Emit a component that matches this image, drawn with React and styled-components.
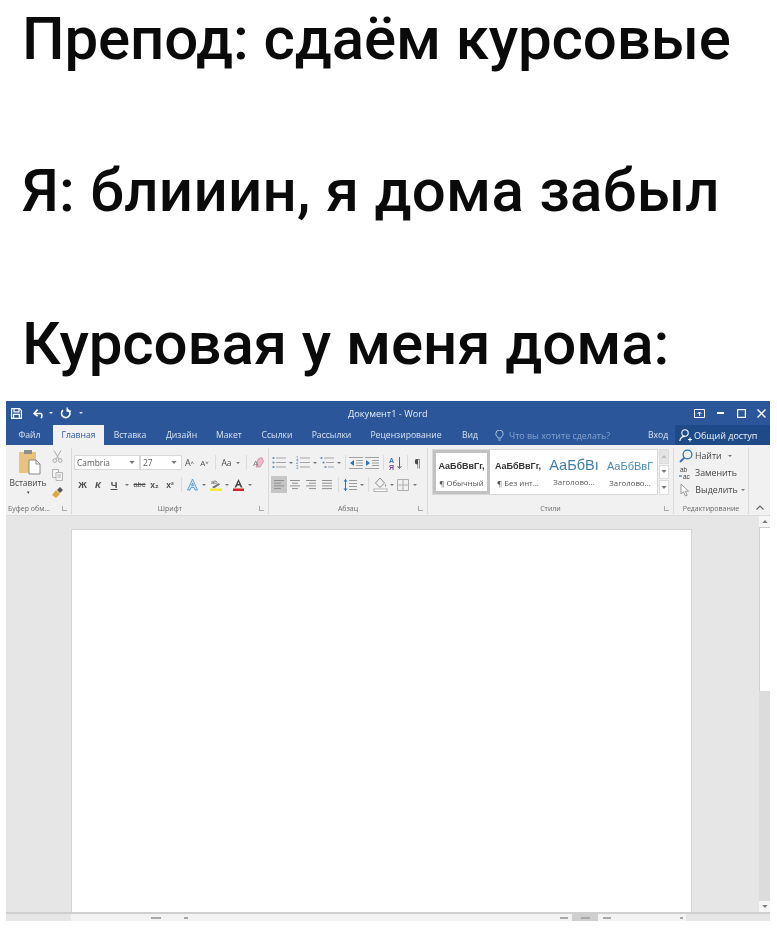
import React from "react";
import styled, { createGlobalStyle } from "styled-components";

const Global = createGlobalStyle`
  html, body { margin: 0; padding: 0; background: #fff; }
  body { width: 777px; height: 930px; overflow: hidden; font-family: "Open Sans", "Liberation Sans", sans-serif; }
`;
const Headings = styled.div`
  padding: 0 0 0 22px;
  height: 401px;
  overflow: hidden;
`;
const Line = styled.div`
  font-family: Roboto, "Liberation Sans", sans-serif;
  font-weight: 500;
  font-size: 60px;
  letter-spacing: ${p => p.$ls}px;
  line-height: 66px;
  margin-top: ${p => p.$top}px;
  color: #0a0a0a;
  white-space: nowrap;
`;
const Win = styled.div`
  margin: 0 7px 0 6px;
  filter: blur(0.5px);
  color: #444;
`;
const TitleBar = styled.div`
  height: 24px;
  background: #2b579a;
  display: flex;
  align-items: center;
  color: #fff;
  position: relative;
`;
const Qat = styled.div`
  display: flex;
  align-items: center;
  padding-left: 5px;
  width: 329px;
  box-sizing: border-box;
`;
const QatItem = styled.span`
  display: flex;
  margin-left: ${p => p.$ml || 0}px;
`;
const DocTitle = styled.div`
  flex: 1;
  font-size: 9.2px;
  color: #e4ebf5;
  padding-left: 13px;
`;
const Controls = styled.div`
  display: flex;
  align-items: center;
`;
const Ctl = styled.span`
  width: ${p => p.$w}px;
  display: flex;
  justify-content: center;
`;
const Tabs = styled.div`
  height: 20px;
  background: #2b579a;
  display: flex;
  align-items: stretch;
  font-size: 8.6px;
  color: #d9e3f1;
`;
const Tab = styled.div`
  width: ${p => p.$w}px;
  display: flex;
  align-items: center;
  justify-content: center;
  white-space: nowrap;
  background: ${p => (p.$on ? "#f1f1f1" : "transparent")};
  color: ${p => (p.$on ? "#2b579a" : "inherit")};
`;
const TellMe = styled.div`
  width: 160px;
  display: flex;
  align-items: center;
  gap: 5px;
  padding-left: 7px;
  color: #87a3cc;
  font-size: 8.9px;
  white-space: nowrap;
  box-sizing: border-box;
`;
const Enter = styled.div`
  width: 27px;
  display: flex;
  align-items: center;
  justify-content: flex-start;
`;
const Share = styled.div`
  flex: 1;
  background: #1f4a88;
  color: #eef3fa;
  display: flex;
  align-items: center;
  gap: 2px;
  padding-left: 4px;
  font-size: 9px;
  white-space: nowrap;
`;
const Ribbon = styled.div`
  height: 71px;
  background: #f1f1f1;
  display: grid;
  grid-template-columns: 66px 197px 159px 246px 75px 21px;
  border-bottom: 1px solid #dcdcdc;
  box-sizing: border-box;
`;
const Group = styled.div`
  display: flex;
  flex-direction: column;
  position: relative;
  border-right: ${p => (p.$plain ? "none" : "1px solid #dadada")};
  margin: 3px 0 1px;
  min-width: 0;
`;
const GroupBody = styled.div`
  flex: 1;
  min-height: 0;
`;
const GroupLabel = styled.div`
  height: 12px;
  font-size: 7px;
  color: #6a6a6a;
  display: flex;
  align-items: center;
  justify-content: ${p => (p.$left ? "flex-start" : "center")};
  white-space: nowrap;
  padding-left: ${p => (p.$left ? 2 : 0)}px;
`;
const Launcher = styled.span`
  position: absolute;
  right: 4px;
  bottom: 3px;
  width: 4px;
  height: 4px;
  border-left: 1px solid #a8a8a8;
  border-bottom: 1px solid #a8a8a8;
`;
const Clip = styled.div`
  display: grid;
  grid-template-columns: 44px 15px;
  height: 100%;
`;
const Paste = styled.div`
  display: flex;
  flex-direction: column;
  align-items: center;
  font-size: 8.4px;
  color: #444;
  padding-top: 1px;
  gap: 2px;
`;
const PasteFrame = styled.span`
  display: flex;
  margin-left: 6px;
`;
const PasteArrow = styled.span`
  font-size: 5px;
  line-height: 6px;
  margin-top: -1px;
`;
const ClipSide = styled.div`
  display: flex;
  flex-direction: column;
  align-items: center;
  gap: 6px;
  padding-top: 2px;
`;
const Rows = styled.div`
  display: flex;
  flex-direction: column;
  gap: 5px;
  padding-top: 6px;
`;
const Row = styled.div`
  display: flex;
  align-items: center;
  height: ${p => p.$h || 17}px;
  padding-left: ${p => p.$pad || 0}px;
`;
const Combo = styled.div`
  width: ${p => p.$w}px;
  height: 15px;
  box-sizing: border-box;
  background: #fff;
  border: 1px solid #d8d8d8;
  margin-right: ${p => p.$gap || 0}px;
  display: flex;
  align-items: center;
  justify-content: space-between;
  padding: 0 4px 0 2px;
  font-size: 8.4px;
  color: #5a5a5a;
`;
const Tool = styled.div`
  width: ${p => p.$w || 16}px;
  height: ${p => p.$h || 17}px;
  flex: none;
  display: flex;
  align-items: center;
  justify-content: center;
  font-size: ${p => p.$fs || 9}px;
  font-weight: ${p => p.$fw || 400};
  font-style: ${p => (p.$it ? "italic" : "normal")};
  color: ${p => p.$c || "#4d4d4d"};
  background: ${p => (p.$on ? "#c6c6c6" : "transparent")};
  font-family: ${p => (p.$sans ? '"Liberation Sans", sans-serif' : "inherit")};
`;
const Caret = styled.sup`
  font-size: 6px;
  line-height: 0;
  vertical-align: 3px;
`;
const Drop = styled.span`
  flex: none;
  width: 0;
  height: 0;
  border-left: 2px solid transparent;
  border-right: 2px solid transparent;
  border-top: 2px solid ${p => p.$c || "#777"};
  margin: 0 ${p => p.$m ?? 4}px;
`;
const Sep = styled.span`
  flex: none;
  width: 1px;
  height: 15px;
  background: #dcdcdc;
  margin: 0 ${p => p.$m ?? 3}px;
`;
const StylesWrap = styled.div`
  display: flex;
  padding: 1px 0 0 4px;
`;
const Gallery = styled.div`
  width: 226px;
  height: 46px;
  background: #fff;
  border: 1px solid #d8d8d8;
  display: grid;
  grid-template-columns: 57px 56px 56px 56px;
  box-sizing: border-box;
`;
const StyleCell = styled.div`
  display: flex;
  flex-direction: column;
  align-items: center;
  justify-content: flex-start;
  box-sizing: border-box;
  border: ${p => (p.$on ? "3px solid #c2c2c2" : "none")};
  padding-top: ${p => (p.$on ? 6 : 9)}px;
  overflow: hidden;
  white-space: nowrap;
`;
const StyleSample = styled.div`
  font-size: ${p => p.$fs || 8}px;
  font-weight: ${p => p.$fw || 400};
  color: ${p => p.$c || "#333"};
  height: 14px;
  line-height: 14px;
  font-family: "Liberation Sans", sans-serif;
  width: 100%;
  text-align: center;
  overflow: hidden;
  margin-top: ${p => p.$mt || 0}px;
`;
const StyleName = styled.div`
  font-size: 7.8px;
  color: #555;
  margin-top: 5px;
`;
const GalleryScroll = styled.div`
  width: 10px;
  height: 46px;
  margin-left: 1px;
  display: grid;
  grid-template-rows: 1fr 1fr 1fr;
  gap: 1px;
`;
const GalleryBtn = styled.div`
  background: ${p => (p.$off ? "#e4e4e4" : "#fff")};
  border: 1px solid #dcdcdc;
  display: flex;
  align-items: center;
  justify-content: center;
`;
const Edit = styled.div`
  display: flex;
  flex-direction: column;
  margin-top: -1px;
  padding: 0 0 0 5px;
`;
const EditRow = styled.div`
  height: 17px;
  display: flex;
  align-items: center;
  gap: 2px;
  font-size: 8.8px;
  color: #444;
  white-space: nowrap;
`;
const Collapse = styled.div`
  display: flex;
  align-items: flex-end;
  justify-content: center;
  padding-bottom: 5px;
`;
const Workspace = styled.div`
  height: 398px;
  background: #e6e6e6;
  display: grid;
  grid-template-columns: 65px 621px 67px 11px;
  box-sizing: border-box;
  border-bottom: 2px solid #cfcfcf;
`;
const Page = styled.div`
  margin-top: 13px;
  background: #fff;
  border: 1px solid #d4d4d4;
  border-bottom: none;
  box-sizing: border-box;
`;
const Scroll = styled.div`
  display: flex;
  flex-direction: column;
  background: #dcdcdc;
  grid-column: 4;
`;
const ScrollBtn = styled.div`
  height: 11px;
  background: #f6f6f6;
  display: flex;
  align-items: center;
  justify-content: center;
`;
const Thumb = styled.div`
  height: 164px;
  background: #fff;
  border-left: 1px solid #cfcfcf;
  border-top: 1px solid #cfcfcf;
  box-sizing: border-box;
`;
const Track = styled.div`
  flex: 1;
`;
const Status = styled.div`
  height: 7px;
  background: #f3f3f3;
  display: flex;
  align-items: center;
  overflow: hidden;
`;
const StatusCell = styled.div`
  width: ${p => p.$w}px;
  height: 100%;
  flex: none;
  background: ${p => p.$bg || "transparent"};
  display: flex;
  align-items: center;
  justify-content: center;
`;
const Speck = styled.span`
  display: block;
  width: ${p => p.$w || 4}px;
  height: 2px;
  background: ${p => p.$c || "#a8a8a8"};
`;

const Tri = ({ up, c = "#777" }) => (
  <svg width="6" height="3" viewBox="0 0 7 4"><path d={up ? "M0 4 3.500 0 7 4z" : "M0 0h7L3.500 4z"} fill={c} /></svg>
);
const SaveIco = () => (
  <svg width="11" height="11" viewBox="0 0 11 11" fill="none" stroke="#fff" strokeWidth="1.200">
    <path d="M.6.6h8l1.800 1.800v8H.6z" /><path d="M3 .8v3h5v-3M2.600 10.200V6.400h5.800v3.800" />
  </svg>
);
const UndoIco = () => (
  <svg width="14" height="11" viewBox="0 0 14 11" fill="none" stroke="#fff" strokeWidth="1.600">
    <path d="M1 5.500h7a3.200 3.200 0 0 1 0 4.600" /><path d="M4.600 1.600 1 5.500l3.600 2.600" />
  </svg>
);
const RedoIco = () => (
  <svg width="12" height="12" viewBox="0 0 12 12" fill="none" stroke="#fff" strokeWidth="1.600">
    <path d="M7 2.400A4.200 4.200 0 1 1 3 3.200" /><path d="M7.200 .6v3.600H11" strokeWidth="1.300" />
  </svg>
);
const DisplayIco = () => (
  <svg width="11" height="9" viewBox="0 0 11 9" fill="none" stroke="#fff"><path d="M.5.500h10v8H.5z" /><path d="M5.500 7V3M3.500 5l2-2 2 2" /></svg>
);
const Bulb = () => (
  <svg width="9" height="11" viewBox="0 0 9 11" fill="none" stroke="#a8c0e0"><path d="M3 8C2.600 6.400.8 5.800.8 3.800a3.700 3.700 0 0 1 7.400 0C8.200 5.800 6.400 6.400 6 8zM3.200 10h2.600" /></svg>
);
const PersonIco = () => (
  <svg width="13" height="13" viewBox="0 0 13 13" fill="none" stroke="#fff" strokeWidth="1.100">
    <circle cx="6" cy="4" r="3.200" /><path d="M.8 12c.5-3 2.300-4.600 5.200-4.600M9 10.500h4M11 8.500v4" />
  </svg>
);
const PasteIco = () => (
  <svg width="24" height="26" viewBox="0 0 24 26">
    <rect x="0" y="3" width="17" height="21" rx="1" fill="#e7c37d" />
    <rect x="5" y="1" width="8" height="4" fill="#8d8d8d" />
    <path d="M10 11h7l4 4v10H10z" fill="#fff" stroke="#888" />
    <path d="M17 11v4h4" fill="none" stroke="#888" />
  </svg>
);
const Scissors = () => (
  <svg width="11" height="13" viewBox="0 0 11 13" fill="none" stroke="#aaa"><path d="M2 .5 7 9M9 .5 4 9" /><circle cx="2.800" cy="10.500" r="1.800" /><circle cx="8.200" cy="10.500" r="1.800" /></svg>
);
const CopyIco = () => (
  <svg width="11" height="12" viewBox="0 0 11 12" fill="#f4f4f4" stroke="#b4b4b4"><path d="M.5.5h6v8h-6z" /><path d="M4 3.500h6.500v8H4z" /><path d="M5.500 6h3.500M5.500 8h3.500" /></svg>
);
const Brush = () => (
  <svg width="11" height="11" viewBox="0 0 11 11"><path d="M0 8 4 3l4 4-4 4z" fill="#e0a93d" /><path d="M5 3l3-3 3 3-3 3z" fill="#555" /></svg>
);
const Eraser = () => (
  <svg width="11" height="12" viewBox="0 0 11 12"><path d="M5 2 9 .5l1.500 4L7 10H3z" fill="#eeb9c9" stroke="#c4718f" strokeWidth=".6" /><text x="0" y="9" fontSize="8" fill="#7a7a7a" fontFamily="Liberation Sans">A</text></svg>
);
const ColorA = ({ bar, fill = "#444" }) => (
  <svg width="13" height="13" viewBox="0 0 13 13">
    <path d="M6.500 1 2.500 9.500h1.800l.8-2h2.800l.8 2h1.800zM5.700 6 6.500 3.800 7.300 6z" fill={fill} />
    <rect x="1" y="10.500" width="11" height="2.500" fill={bar} />
  </svg>
);
const OutlineA = () => (
  <svg width="13" height="13" viewBox="0 0 13 13"><path d="M6.500 1 1.500 12h2.500l1-2.500h3l1 2.500h2.500zM5.600 7.500 6.500 5l.9 2.500z" fill="#d3e3f3" stroke="#4a90c8" strokeWidth=".8" /></svg>
);
const Highlight = () => (
  <svg width="14" height="13" viewBox="0 0 14 13">
    <text x="2" y="6" fontSize="6" fill="#555" fontFamily="Liberation Sans">ab</text>
    <path d="M3 9 10 5l1 1.500-6 4z" fill="#777" />
    <rect x="1" y="10.500" width="12" height="2.500" fill="#f4e735" />
  </svg>
);
const Lines = ({ kind }) => {
  const rows = {
    left: [[2, 12], [2, 9], [2, 12], [2, 9]],
    center: [[2, 12], [4, 10], [2, 12], [4, 10]],
    right: [[2, 12], [5, 12], [2, 12], [5, 12]],
    just: [[2, 12], [2, 12], [2, 12], [2, 12]],
  }[kind];
  return (
    <svg width="14" height="11" viewBox="0 0 14 11" stroke="#909090">
      {rows.map(([a, b], i) => <path key={i} d={`M${a} ${1.500 + i * 2.700}H${b}`} />)}
    </svg>
  );
};
const ListIco = ({ kind }) => (
  <svg width="14" height="13" viewBox="0 0 14 13">
    {[2, 6.500, 11].map((y, i) => (
      <g key={i}>
        {kind === "num"
          ? <text x="0" y={y + 1.500} fontSize="4.500" fill="#5a8fc4" fontFamily="Liberation Sans">{i + 1}</text>
          : <circle cx={kind === "multi" ? 1.500 + i * 2 : 1.500} cy={y} r="1.100" fill="#5a8fc4" />}
        <path d={`M${kind === "multi" ? 4 + i * 2 : 4} ${y}H14`} stroke="#a4a4a4" />
      </g>
    ))}
  </svg>
);
const Indent = ({ out }) => (
  <svg width="14" height="12" viewBox="0 0 14 12" stroke="#a0a0a0">
    <path d="M0 .5h14M7 3.500h7M7 6h7M7 8.500h7M0 11.500h14" />
    <path d={out ? "M5 3 1 6l4 3z" : "M1 3l4 3-4 3z"} fill="#2e75b6" stroke="none" />
  </svg>
);
const SortIco = () => (
  <svg width="14" height="14" viewBox="0 0 14 14">
    <text x="0" y="6.500" fontSize="7" fontWeight="700" fill="#3a78b8" fontFamily="Liberation Sans">А</text>
    <text x="0" y="13.500" fontSize="7" fontWeight="700" fill="#7a4a96" fontFamily="Liberation Sans">Я</text>
    <path d="M10.500 1v11M8.500 10l2 2.500 2-2.500" fill="none" stroke="#666" />
  </svg>
);
const Spacing = () => (
  <svg width="14" height="14" viewBox="0 0 14 14"><path d="M2.500 1v12" stroke="#2e75b6" /><path d="M.5 3.500l2-2.500 2 2.500zM.5 10.500l2 2.500 2-2.500z" fill="#2e75b6" /><path d="M6 2.500h8M6 5.500h8M6 8.500h8M6 11.500h8" stroke="#999" /></svg>
);
const Bucket = () => (
  <svg width="15" height="15" viewBox="0 0 15 15" fill="none"><path d="M7 1 2.500 6 7 10.500 11.500 6z" stroke="#888" /><path d="M12.500 7c.8 1.200 1 2 .3 2.500-.7.300-1.300-.6-.3-2.500z" fill="#888" /><rect x="1" y="12" width="13" height="2.500" stroke="#b4b4b4" fill="#fff" /></svg>
);
const Borders = () => (
  <svg width="12" height="12" viewBox="0 0 12 12" fill="none" stroke="#aeaeae"><path d="M.5.5h11v11H.5zM6 .5v11M.5 6h11" /></svg>
);
const Search = () => (
  <svg width="14" height="14" viewBox="0 0 14 14" fill="none" stroke="#2f6cb3" strokeWidth="1.300"><circle cx="8.500" cy="5.500" r="4.400" /><path d="M5.300 8.700 1 13" strokeWidth="1.800" /></svg>
);
const Replace = () => (
  <svg width="14" height="14" viewBox="0 0 14 14">
    <text x="1" y="6" fontSize="6.500" fill="#444" fontFamily="Liberation Sans">ab</text>
    <text x="4" y="13" fontSize="6.500" fill="#444" fontFamily="Liberation Sans">ac</text>
    <path d="M0 10h3" stroke="#2e75b6" strokeWidth="1.200" />
  </svg>
);
const Cursor = () => (
  <svg width="12" height="14" viewBox="0 0 12 14"><path d="M2 1v10l2.500-2.200L6.500 13l1.700-.8-2-4h3.300z" fill="#fff" stroke="#9a9a9a" /></svg>
);

const TAB_DATA = [
  ["Файл", 47], ["Главная", 51, true], ["Вставка", 52], ["Дизайн", 51], ["Макет", 44],
  ["Ссылки", 52], ["Рассылки", 57], ["Рецензирование", 92], ["Вид", 36],
];
const STYLE_DATA = [
  ["АаБбВвГг,", "¶ Обычный", { $fw: 700, $fs: 9 }, true],
  ["АаБбВвГг,", "¶ Без инт...", { $fw: 700, $fs: 9 }],
  ["АаБбВı", "Заголово...", { $fs: 14.500, $c: "#3f7ea8", $mt: -1 }],
  ["АаБбВвГ", "Заголово...", { $fs: 11, $c: "#4a8ab5" }],
];

export default function App() {
  return (
    <>
      <Global />
      <Headings>
        <Line $top={6} $ls={-0.12}>Препод: сдаём курсовые</Line>
        <Line $top={86} $ls={0.25}>Я: блииин, я дома забыл</Line>
        <Line $top={87} $ls={-0.08}>Курсовая у меня дома:</Line>
      </Headings>
      <Win>
        <TitleBar>
          <Qat>
            <SaveIco />
            <QatItem $ml={11}><UndoIco /></QatItem>
            <Drop $m={2} $c="#fff" />
            <QatItem $ml={5}><RedoIco /></QatItem>
            <QatItem $ml={7}><Drop $m={0} $c="#dfe7f3" /></QatItem>
          </Qat>
          <DocTitle>Документ1 - Word</DocTitle>
          <Controls>
            <Ctl $w={21}><DisplayIco /></Ctl>
            <Ctl $w={21}><Speck $w={7} $c="#fff" /></Ctl>
            <Ctl $w={21}><svg width="9" height="9" viewBox="0 0 9 9" fill="none" stroke="#fff" strokeWidth="1.200"><path d="M.6.6h7.800v7.800H.6z" /></svg></Ctl>
            <Ctl $w={18}><svg width="9" height="9" viewBox="0 0 9 9" stroke="#fff" strokeWidth="1.400"><path d="m.5.500 8 8M8.500.5l-8 8" /></svg></Ctl>
          </Controls>
        </TitleBar>
        <Tabs>
          {TAB_DATA.map(([t, w, on]) => <Tab key={t} $w={w} $on={on}>{t}</Tab>)}
          <TellMe><Bulb />Что вы хотите сделать?</TellMe>
          <Enter>Вход</Enter>
          <Share><PersonIco />Общий доступ</Share>
        </Tabs>
        <Ribbon>
          <Group>
            <GroupBody>
              <Clip>
                <Paste>
                  <PasteFrame><PasteIco /></PasteFrame>
                  Вставить
                  <PasteArrow>▾</PasteArrow>
                </Paste>
                <ClipSide><Scissors /><CopyIco /><Brush /></ClipSide>
              </Clip>
            </GroupBody>
            <GroupLabel $left>Буфер обм...</GroupLabel>
            <Launcher />
          </Group>
          <Group>
            <GroupBody>
              <Rows>
                <Row $pad={2}>
                  <Combo $w={66}>Cambria<Tri /></Combo>
                  <Combo $w={42}>27<Tri /></Combo>
                  <Tool $w={15} $fs={9}>A<Caret>˄</Caret></Tool>
                  <Tool $w={15} $fs={8}>A<Caret>˅</Caret></Tool>
                  <Sep $m={3} />
                  <Tool $w={15} $fs={8.500}>Aa</Tool>
                  <Drop $m={2} />
                  <Sep $m={4} />
                  <Tool $w={14}><Eraser /></Tool>
                </Row>
                <Row $pad={3}>
                  <Tool $w={15} $fw={700} $fs={9.500} $sans>Ж</Tool>
                  <Tool $w={16} $fw={700} $it $fs={9.500} $sans>К</Tool>
                  <Tool $w={16} $fw={700} $fs={9.500} $sans style={{ textDecoration: "underline" }}>Ч</Tool>
                  <Drop $m={3} />
                  <Tool $w={15} $fs={7.500} $sans style={{ textDecoration: "line-through" }}>abc</Tool>
                  <Tool $w={15} $fs={8.500} $fw={700} $sans>x₂</Tool>
                  <Tool $w={16} $fs={8.500} $fw={700} $sans>x²</Tool>
                  <Sep $m={3} />
                  <Tool $w={15}><OutlineA /></Tool>
                  <Drop $m={2} />
                  <Tool $w={15}><Highlight /></Tool>
                  <Drop $m={2} />
                  <Tool $w={15}><ColorA bar="#d42027" /></Tool>
                  <Drop $m={2} />
                </Row>
              </Rows>
            </GroupBody>
            <GroupLabel>Шрифт</GroupLabel>
            <Launcher />
          </Group>
          <Group>
            <GroupBody>
              <Rows>
                <Row $pad={2}>
                  <Tool><ListIco /></Tool><Drop $m={2} />
                  <Tool><ListIco kind="num" /></Tool><Drop $m={2} />
                  <Tool><ListIco kind="multi" /></Tool><Drop $m={2} />
                  <Sep $m={2} />
                  <Tool><Indent out /></Tool>
                  <Tool><Indent /></Tool>
                  <Sep $m={3} />
                  <Tool $w={18}><SortIco /></Tool>
                  <Sep $m={2} />
                  <Tool $w={15} $fs={10}>¶</Tool>
                </Row>
                <Row $pad={2}>
                  <Tool $on><Lines kind="left" /></Tool>
                  <Tool><Lines kind="center" /></Tool>
                  <Tool><Lines kind="right" /></Tool>
                  <Tool><Lines kind="just" /></Tool>
                  <Sep $m={3} />
                  <Tool $w={16}><Spacing /></Tool><Drop $m={2} />
                  <Sep $m={2} />
                  <Tool $w={18}><Bucket /></Tool><Drop $m={1} />
                  <Tool $w={15}><Borders /></Tool><Drop $m={3} />
                </Row>
              </Rows>
            </GroupBody>
            <GroupLabel>Абзац</GroupLabel>
            <Launcher />
          </Group>
          <Group>
            <GroupBody>
              <StylesWrap>
                <Gallery>
                  {STYLE_DATA.map(([sample, name, props, on], i) => (
                    <StyleCell key={i} $on={on}>
                      <StyleSample {...props}>{sample}</StyleSample>
                      <StyleName>{name}</StyleName>
                    </StyleCell>
                  ))}
                </Gallery>
                <GalleryScroll>
                  <GalleryBtn $off><Tri up c="#bbb" /></GalleryBtn>
                  <GalleryBtn><Tri /></GalleryBtn>
                  <GalleryBtn><Tri /></GalleryBtn>
                </GalleryScroll>
              </StylesWrap>
            </GroupBody>
            <GroupLabel>Стили</GroupLabel>
            <Launcher />
          </Group>
          <Group>
            <GroupBody>
              <Edit>
                <EditRow><Search />Найти<Drop $m={4} /></EditRow>
                <EditRow><Replace />Заменить</EditRow>
                <EditRow><Cursor />&nbsp;Выделить<Drop $m={1} /></EditRow>
              </Edit>
            </GroupBody>
            <GroupLabel>Редактирование</GroupLabel>
          </Group>
          <Collapse>
            <svg width="8" height="5" viewBox="0 0 8 5" fill="none" stroke="#666" strokeWidth="1.200"><path d="m.5 4.500 3.500-3.500 3.500 3.500" /></svg>
          </Collapse>
        </Ribbon>
        <Workspace>
          <div />
          <Page />
          <div />
          <Scroll>
            <ScrollBtn><Tri up /></ScrollBtn>
            <Thumb />
            <Track />
            <ScrollBtn><Tri /></ScrollBtn>
          </Scroll>
        </Workspace>
        <Status>
          <StatusCell $w={65} $bg="#e6e6e6" />
          <StatusCell $w={75} />
          <StatusCell $w={20}><Speck $w={10} /></StatusCell>
          <StatusCell $w={40}><Speck $w={4} /></StatusCell>
          <StatusCell $w={350} />
          <StatusCell $w={16}><Speck $w={8} /></StatusCell>
          <StatusCell $w={26} $bg="#cfcfcf"><Speck $w={9} /></StatusCell>
          <StatusCell $w={18}><Speck $w={8} /></StatusCell>
          <StatusCell $w={60} />
          <StatusCell $w={10}><Speck $w={3} /></StatusCell>
          <StatusCell $w={84} $bg="#e6e6e6" />
        </Status>
      </Win>
    </>
  );
}
